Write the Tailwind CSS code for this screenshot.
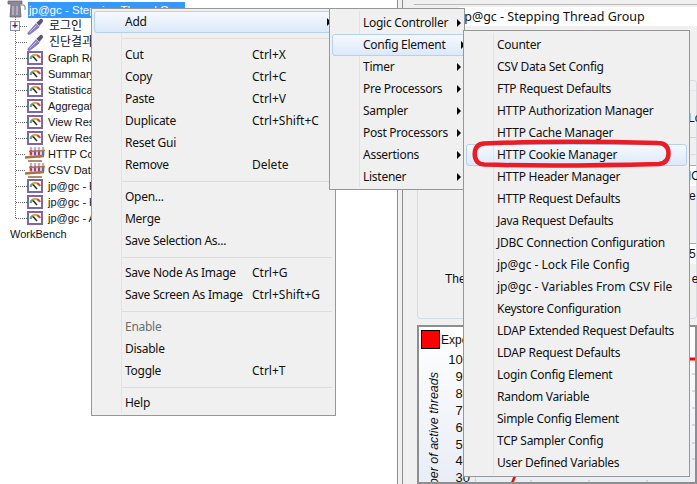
<!doctype html>
<html>
<head>
<meta charset="utf-8">
<script src="https://cdn.jsdelivr.net/npm/@tailwindcss/browser@4"></script>
</head>
<body class="relative w-[697px] h-[484px] overflow-hidden bg-white font-['Noto_Sans','Noto_Sans_CJK_KR',sans-serif] text-[12px] text-[#111]">
<svg class="hidden">
  <symbol id="gauge" viewBox="0 0 16 16">
    <rect x="1" y="2" width="14" height="12" fill="#fff" stroke="#7c68a8" stroke-width="2"/>
    <path d="M3.5 9A5 5 0 0 1 6 5.5" fill="none" stroke="#55b060" stroke-width="2.2"/>
    <path d="M6 5.5A5 5 0 0 1 10 5.2" fill="none" stroke="#f0a040" stroke-width="2.2"/>
    <path d="M10 5.2A5 5 0 0 1 13 8" fill="none" stroke="#e04030" stroke-width="2.2"/>
    <path d="M6 6.5L10 11" stroke="#222" stroke-width="1.4"/>
  </symbol>
  <symbol id="pipette" viewBox="0 0 18 18">
    <path d="M1.5 17.5L0.8 16L9.5 6L13 9.5L3.5 17Z" fill="#8f7cc4" stroke="#6f5fa6" stroke-width="0.7"/>
    <path d="M3 15L10 8" stroke="#cfc6e8"/>
    <path d="M10 5L13 2Q15 0 16.5 1.5Q18 3 16 5L13 8.5Z" fill="#5f5478"/>
  </symbol>
  <symbol id="rack" viewBox="0 0 20 16">
    <g stroke-width="2.4">
      <path d="M6 1V12" stroke="#b8b4d8"/><path d="M10 1V12" stroke="#b8b4d8"/><path d="M14 1V12" stroke="#b8b4d8"/><path d="M18 1V10" stroke="#b8b4d8"/>
      <path d="M6 4V9" stroke="#c83848"/><path d="M10 4V9" stroke="#7050c0"/><path d="M14 4V9" stroke="#c83848"/><path d="M18 4V9" stroke="#4070c0"/>
    </g>
    <path d="M4 5.5L20 4.5" stroke="#b07a44" stroke-width="1.6"/>
    <path d="M0 11.5L19 10" stroke="#a9733f" stroke-width="2.6"/>
    <path d="M3 15H17" stroke="#8a5a30" stroke-width="1.4"/>
  </symbol>
</svg>

<main class="flex h-full">
  <!-- Tree -->
  <section class="relative w-[397px] h-full pt-[2px]">
    <span class="absolute left-[15px] top-[17px] h-[201px] border-l border-dotted border-[#666]"></span>
    <div class="flex items-center h-[16px] relative">
      <svg class="ml-[7px] mt-[-2px] w-[19px] h-[18px] shrink-0" viewBox="0 0 19 18">
        <path d="M1 1H15V4H13L14 17H3L4 4H1Z" fill="#8d8897" stroke="#5f5a68" stroke-width="0.7"/>
        <path d="M6 6V15M10 6V15" stroke="#d5d2dc"/>
        <path d="M14 5Q19 4 18 10" fill="none" stroke="#9a96a4" stroke-width="1.3"/>
      </svg>
      <span class="ml-[2px] w-[157px] h-[16px] bg-[#3399ff] text-white px-[1px] font-['Liberation_Sans'] text-[11.5px] leading-[16px] whitespace-nowrap overflow-hidden">jp@gc - Stepping Thread Group</span>
    </div>
    <ul class="font-['Liberation_Sans','Noto_Sans_CJK_KR',sans-serif] text-[11px]">
      <li class="relative flex items-center h-[16px] pl-[27px] gap-[5px]">
        <span class="absolute left-[10px] top-[3px] w-[10px] h-[10px] border border-[#8a8fa8] bg-[#f4f6fa] text-[#1a2a80] text-[10px] leading-[8px] text-center font-bold">+</span>
        <span class="absolute left-[20px] top-[8px] w-[7px] border-t border-dotted border-[#666]"></span>
        <svg class="w-[17px] h-[17px] shrink-0"><use href="#pipette"/></svg><span class="text-[12px]">로그인</span></li>
      <li class="relative flex items-center h-[16px] pl-[27px] gap-[5px]">
        <span class="absolute left-[16px] top-[8px] w-[11px] border-t border-dotted border-[#666]"></span>
        <svg class="w-[17px] h-[17px] shrink-0"><use href="#pipette"/></svg><span class="text-[12px]">진단결과</span></li>
      <li class="relative flex items-center h-[16px] pl-[27px] gap-[5px]"><span class="absolute left-[16px] top-[8px] w-[11px] border-t border-dotted border-[#666]"></span><svg class="w-[16px] h-[16px] shrink-0"><use href="#gauge"/></svg><span>Graph Results</span></li>
      <li class="relative flex items-center h-[16px] pl-[27px] gap-[5px]"><span class="absolute left-[16px] top-[8px] w-[11px] border-t border-dotted border-[#666]"></span><svg class="w-[16px] h-[16px] shrink-0"><use href="#gauge"/></svg><span>Summary Report</span></li>
      <li class="relative flex items-center h-[16px] pl-[27px] gap-[5px]"><span class="absolute left-[16px] top-[8px] w-[11px] border-t border-dotted border-[#666]"></span><svg class="w-[16px] h-[16px] shrink-0"><use href="#gauge"/></svg><span>Statistical Aggregate</span></li>
      <li class="relative flex items-center h-[16px] pl-[27px] gap-[5px]"><span class="absolute left-[16px] top-[8px] w-[11px] border-t border-dotted border-[#666]"></span><svg class="w-[16px] h-[16px] shrink-0"><use href="#gauge"/></svg><span>Aggregate Report</span></li>
      <li class="relative flex items-center h-[16px] pl-[27px] gap-[5px]"><span class="absolute left-[16px] top-[8px] w-[11px] border-t border-dotted border-[#666]"></span><svg class="w-[16px] h-[16px] shrink-0"><use href="#gauge"/></svg><span>View Results Tree</span></li>
      <li class="relative flex items-center h-[16px] pl-[27px] gap-[5px]"><span class="absolute left-[16px] top-[8px] w-[11px] border-t border-dotted border-[#666]"></span><svg class="w-[16px] h-[16px] shrink-0"><use href="#gauge"/></svg><span>View Results in Table</span></li>
      <li class="relative flex items-center h-[16px] pl-[25px] gap-[3px]"><span class="absolute left-[16px] top-[8px] w-[9px] border-t border-dotted border-[#666]"></span><svg class="w-[20px] h-[16px] shrink-0"><use href="#rack"/></svg><span>HTTP Cookie Manager</span></li>
      <li class="relative flex items-center h-[16px] pl-[25px] gap-[3px]"><span class="absolute left-[16px] top-[8px] w-[9px] border-t border-dotted border-[#666]"></span><svg class="w-[20px] h-[16px] shrink-0"><use href="#rack"/></svg><span>CSV Data Set Config</span></li>
      <li class="relative flex items-center h-[16px] pl-[27px] gap-[5px]"><span class="absolute left-[16px] top-[8px] w-[11px] border-t border-dotted border-[#666]"></span><svg class="w-[16px] h-[16px] shrink-0"><use href="#gauge"/></svg><span>jp@gc - Response Times</span></li>
      <li class="relative flex items-center h-[16px] pl-[27px] gap-[5px]"><span class="absolute left-[16px] top-[8px] w-[11px] border-t border-dotted border-[#666]"></span><svg class="w-[16px] h-[16px] shrink-0"><use href="#gauge"/></svg><span>jp@gc - Hits per Second</span></li>
      <li class="relative flex items-center h-[16px] pl-[27px] gap-[5px]"><span class="absolute left-[16px] top-[8px] w-[11px] border-t border-dotted border-[#666]"></span><svg class="w-[16px] h-[16px] shrink-0"><use href="#gauge"/></svg><span>jp@gc - Active Threads</span></li>
      <li class="flex items-center h-[16px] pl-[10px]">WorkBench</li>
    </ul>
  </section>

  <!-- Splitter -->
  <div class="w-[6px] h-full border-x border-[#8e8e8e] bg-[#f0f0f0]"></div>

  <!-- Right pane -->
  <section class="flex-1 min-w-0 h-full bg-[#f0f0f0] flex flex-col pt-[4px] font-['Liberation_Sans',sans-serif] overflow-hidden">
    <div class="ml-[11px] h-[76px] border-t border-[#b8b8b8] pt-[2px]">
      <div class="ml-[45px] h-[19px] bg-white pl-[2px] font-['Noto_Sans'] text-[12.5px] leading-[19px] whitespace-nowrap">jp@gc - Stepping Thread Group</div>
    </div>
    <div class="ml-[14px] h-[239px] border border-[#d5dce4] rounded-[3px] flex flex-col">
      <div class="h-[10px] ml-[60px] border-b border-[#e4e8ee]"></div>
      <div class="h-[47px] ml-[60px] border-b border-[#d0d4da] flex items-center pl-[210px] pt-[8px]">Lo</div>
      <div class="h-[17px] ml-[60px] border-b border-[#d8dce2]"></div>
      <div class="h-[11px] ml-[60px] border-b border-[#a8a8a8]"></div>
      <div class="h-[20px] ml-[60px] bg-white flex items-center pl-[210px]">IO</div>
      <div class="h-[58px] ml-[60px] border-b border-[#a8a8a8] pl-[211px] pt-[1px]">e</div>
      <div class="h-[20px] ml-[60px] bg-white flex items-center pl-[211px]">5</div>
      <div class="flex items-center h-[32px] pl-[27px] pb-[3px]"><span class="whitespace-nowrap">The</span><span class="ml-[226px]">e</span></div>
    </div>
    <div class="relative ml-[14px] mt-[6px] flex-1 border-2 border-[#8e8e8e] bg-gradient-to-b from-white to-[#e9edf6] overflow-hidden">
      <div class="flex items-center pl-[2px] pt-[3px] gap-[1px]">
        <span class="w-[19px] h-[19px] bg-[#ff0000] border border-black"></span><span>Expected parallel</span>
      </div>
      <div class="absolute left-[19px] top-[25px] w-[32px] text-right text-[13px] leading-[16.9px]">
        <div>100</div><div>90</div><div>80</div><div>70</div><div>60</div><div>50</div><div>40</div><div>30</div>
      </div>
      <span class="absolute left-[-85px] top-[137px] w-[200px] h-[16px] leading-[16px] text-right -rotate-90 italic text-[12.5px] whitespace-nowrap">Number of active threads</span>
      <span class="absolute left-[56px] top-[30px] bottom-0 border-l border-[#cfd3dc]"></span>
      <svg class="absolute left-[56px] top-[28px] w-[222px] h-[128px]" viewBox="0 0 222 128">
        <path d="M37 128L40 121" stroke="#f00" stroke-width="2.5" fill="none"/>
        <path d="M212 4H222" stroke="#f00" stroke-width="3" fill="none"/>
        <path d="M217 19h3M217 36h3M217 53h3M217 70h3M217 88h3M217 104h3M56 125v3M114 125v3M172 125v3" stroke="#b8bcc8" fill="none"/>
      </svg>
    </div>
  </section>
</main>

<!-- Main popup -->
<nav class="absolute left-[91px] top-[8px] w-[245px] h-[408px] border border-[#979797] bg-[#f0f0f0] pt-[2px] px-[2px] tracking-[-0.27px]">
  <span class="absolute left-[29px] top-[2px] bottom-[2px] border-l border-[#e2e3e3]"></span>
  <div class="relative flex items-center h-[22px] pl-[30px] w-[238px] rounded-[3px] border border-[#b4d0f2] bg-gradient-to-b from-[#f6f9fe] to-[#dce9fa]">Add<span class="absolute right-[0px] w-0 h-0 border-y-[4px] border-y-transparent border-l-[4px] border-l-black"></span></div>
  <hr class="ml-[28px] mt-[5px] mb-[5px] border-[#dcdcdc] w-[210px]">
  <div class="relative flex flex-col">
    <div class="flex items-center h-[22px] pl-[31px]"><span class="w-[127px]">Cut</span><span class="tracking-normal">Ctrl+X</span></div>
    <div class="flex items-center h-[22px] pl-[31px]"><span class="w-[127px]">Copy</span><span class="tracking-normal">Ctrl+C</span></div>
    <div class="flex items-center h-[22px] pl-[31px]"><span class="w-[127px]">Paste</span><span class="tracking-normal">Ctrl+V</span></div>
    <div class="flex items-center h-[22px] pl-[31px]"><span class="w-[127px]">Duplicate</span><span class="tracking-normal">Ctrl+Shift+C</span></div>
    <div class="flex items-center h-[22px] pl-[31px]"><span class="w-[127px]">Reset Gui</span></div>
    <div class="flex items-center h-[22px] pl-[31px]"><span class="w-[127px]">Remove</span><span class="tracking-normal">Delete</span></div>
  </div>
  <hr class="ml-[28px] mt-[5px] mb-[4px] border-[#dcdcdc] w-[210px]">
  <div class="flex items-center h-[22px] pl-[31px]">Open...</div>
  <div class="flex items-center h-[22px] pl-[31px]">Merge</div>
  <div class="flex items-center h-[22px] pl-[31px]">Save Selection As...</div>
  <hr class="ml-[28px] mt-[5px] mb-[4px] border-[#dcdcdc] w-[210px]">
  <div class="flex items-center h-[22px] pl-[31px]"><span class="w-[127px]">Save Node As Image</span><span class="tracking-normal">Ctrl+G</span></div>
  <div class="flex items-center h-[22px] pl-[31px]"><span class="w-[127px]">Save Screen As Image</span><span class="tracking-normal">Ctrl+Shift+G</span></div>
  <hr class="ml-[28px] mt-[5px] mb-[4px] border-[#dcdcdc] w-[210px]">
  <div class="flex items-center h-[22px] pl-[31px] text-[#6d6d6d]">Enable</div>
  <div class="flex items-center h-[22px] pl-[31px]">Disable</div>
  <div class="flex items-center h-[22px] pl-[31px]"><span class="w-[127px]">Toggle</span><span class="tracking-normal">Ctrl+T</span></div>
  <hr class="ml-[28px] mt-[5px] mb-[4px] border-[#dcdcdc] w-[210px]">
  <div class="flex items-center h-[22px] pl-[31px]">Help</div>
</nav>

<!-- Add submenu -->
<nav class="absolute left-[329px] top-[8px] w-[136px] h-[182px] border border-[#979797] bg-[#f0f0f0] pt-[3px] px-[2px] tracking-[-0.27px]">
  <span class="absolute left-[29px] top-[2px] bottom-[2px] border-l border-[#e2e3e3]"></span>
  <div class="relative flex items-center justify-between h-[22px] pl-[31px] pr-[1px]">Logic Controller<span class="w-0 h-0 border-y-[4px] border-y-transparent border-l-[4px] border-l-black"></span></div>
  <div class="relative flex items-center justify-between h-[22px] pl-[30px] pr-[0px] rounded-[3px] border border-[#b4d0f2] bg-gradient-to-b from-[#f6f9fe] to-[#dce9fa] w-[134px]">Config Element<span class="w-0 h-0 border-y-[4px] border-y-transparent border-l-[4px] border-l-black"></span></div>
  <div class="relative flex items-center justify-between h-[22px] pl-[31px] pr-[1px]">Timer<span class="w-0 h-0 border-y-[4px] border-y-transparent border-l-[4px] border-l-black"></span></div>
  <div class="relative flex items-center justify-between h-[22px] pl-[31px] pr-[1px]">Pre Processors<span class="w-0 h-0 border-y-[4px] border-y-transparent border-l-[4px] border-l-black"></span></div>
  <div class="relative flex items-center justify-between h-[22px] pl-[31px] pr-[1px]">Sampler<span class="w-0 h-0 border-y-[4px] border-y-transparent border-l-[4px] border-l-black"></span></div>
  <div class="relative flex items-center justify-between h-[22px] pl-[31px] pr-[1px]">Post Processors<span class="w-0 h-0 border-y-[4px] border-y-transparent border-l-[4px] border-l-black"></span></div>
  <div class="relative flex items-center justify-between h-[22px] pl-[31px] pr-[1px]">Assertions<span class="w-0 h-0 border-y-[4px] border-y-transparent border-l-[4px] border-l-black"></span></div>
  <div class="relative flex items-center justify-between h-[22px] pl-[31px] pr-[1px]">Listener<span class="w-0 h-0 border-y-[4px] border-y-transparent border-l-[4px] border-l-black"></span></div>
</nav>

<!-- Config submenu -->
<nav class="absolute left-[463px] top-[30px] w-[227px] h-[447px] border border-[#979797] bg-[#f0f0f0] pt-[3px] px-[2px] tracking-[-0.27px]">
  <span class="absolute left-[29px] top-[2px] bottom-[2px] border-l border-[#e2e3e3]"></span>
  <div class="flex items-center h-[22px] pl-[31px]">Counter</div>
  <div class="flex items-center h-[22px] pl-[31px]">CSV Data Set Config</div>
  <div class="flex items-center h-[22px] pl-[31px]">FTP Request Defaults</div>
  <div class="flex items-center h-[22px] pl-[31px]">HTTP Authorization Manager</div>
  <div class="flex items-center h-[22px] pl-[31px]">HTTP Cache Manager</div>
  <div class="flex items-center h-[22px] pl-[30px] rounded-[3px] border border-[#b4d0f2] bg-gradient-to-b from-[#f6f9fe] to-[#dce9fa]">HTTP Cookie Manager</div>
  <div class="flex items-center h-[22px] pl-[31px]">HTTP Header Manager</div>
  <div class="flex items-center h-[22px] pl-[31px]">HTTP Request Defaults</div>
  <div class="flex items-center h-[22px] pl-[31px]">Java Request Defaults</div>
  <div class="flex items-center h-[22px] pl-[31px]">JDBC Connection Configuration</div>
  <div class="flex items-center h-[22px] pl-[31px] tracking-normal">jp@gc - Lock File Config</div>
  <div class="flex items-center h-[22px] pl-[31px] tracking-normal">jp@gc - Variables From CSV File</div>
  <div class="flex items-center h-[22px] pl-[31px]">Keystore Configuration</div>
  <div class="flex items-center h-[22px] pl-[31px]">LDAP Extended Request Defaults</div>
  <div class="flex items-center h-[22px] pl-[31px]">LDAP Request Defaults</div>
  <div class="flex items-center h-[22px] pl-[31px]">Login Config Element</div>
  <div class="flex items-center h-[22px] pl-[31px]">Random Variable</div>
  <div class="flex items-center h-[22px] pl-[31px]">Simple Config Element</div>
  <div class="flex items-center h-[22px] pl-[31px]">TCP Sampler Config</div>
  <div class="flex items-center h-[22px] pl-[31px]">User Defined Variables</div>
</nav>

<!-- Red annotation -->
<svg class="absolute left-[470px] top-[137px] w-[204px] h-[34px]" viewBox="0 0 204 34">
  <path d="M14 6.5C60 4.5 130 4.5 188 6Q198 6 198.5 16Q198.5 26 189 27C130 28.5 60 29 14 27.5Q5 27 4.7 17Q5 7 14 6.5Z" fill="none" stroke="#ed1c24" stroke-width="4.5"/>
</svg>
</body>
</html>
